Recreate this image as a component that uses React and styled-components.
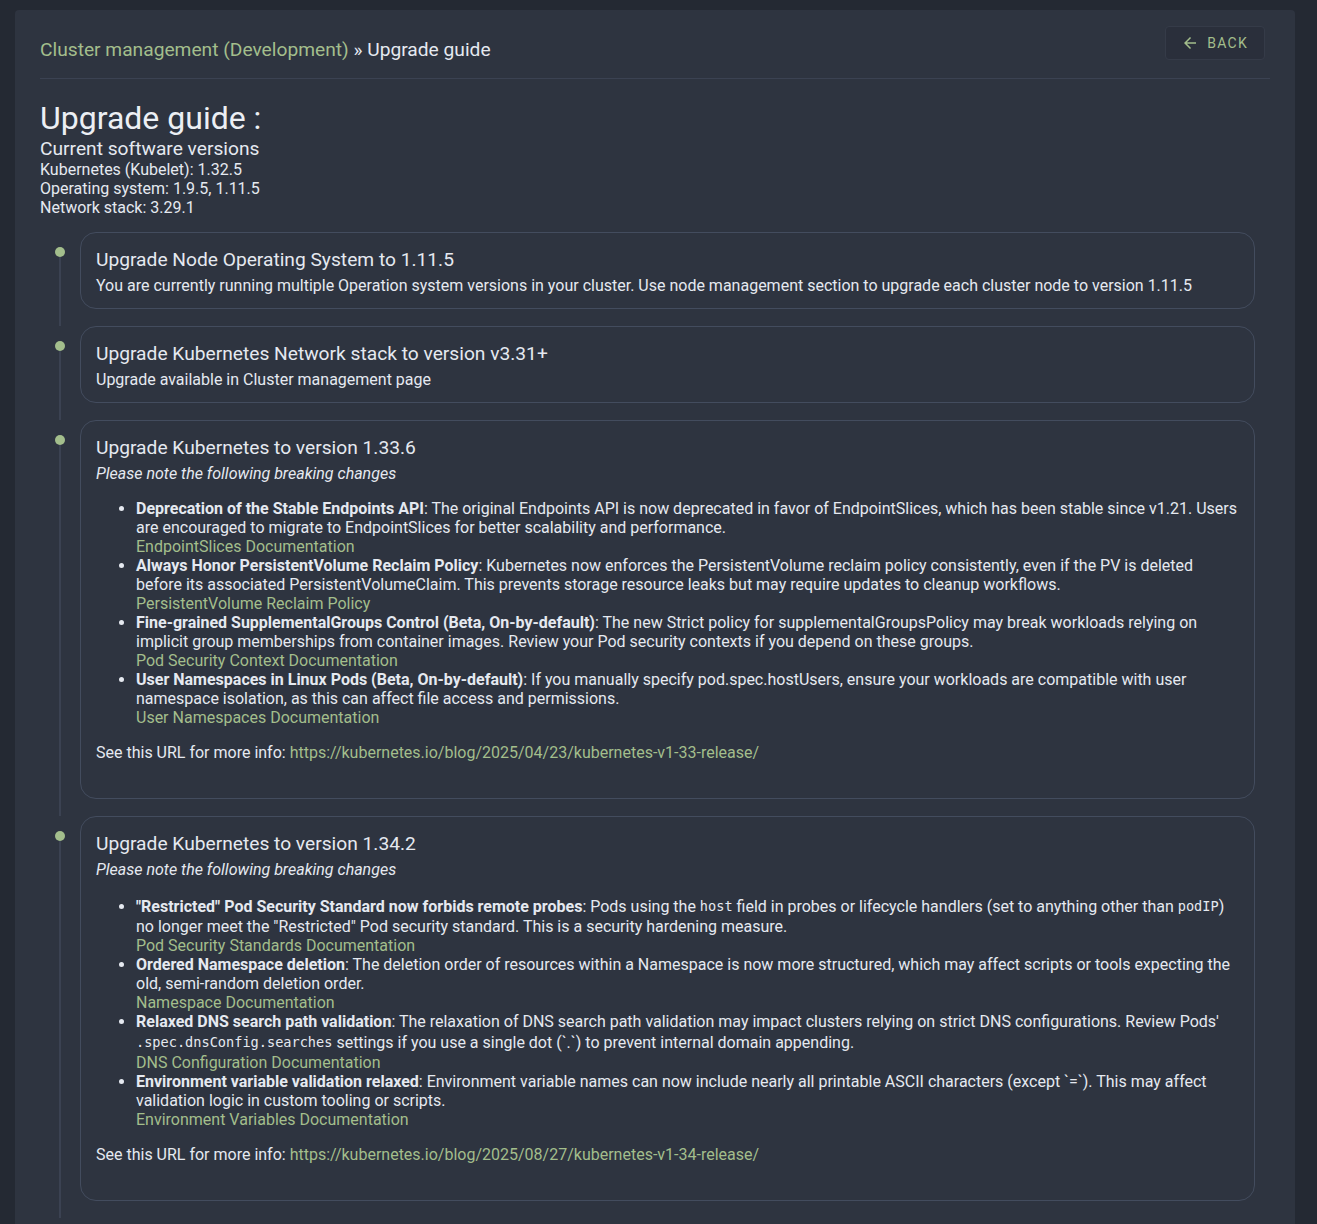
import React from "react";
import styled, { createGlobalStyle } from "styled-components";

const GlobalStyle = createGlobalStyle`
  html, body { margin: 0; padding: 0; background: #242933; }
  body {
    font-family: Roboto, "Liberation Sans", Arial, sans-serif;
    color: #e5e9f0;
    padding: 10px 15px;
  }
  * { box-sizing: border-box; }
`;

const Panel = styled.div`
  width: 1280px;
  background: #2e3440;
  border-radius: 4px;
  padding: 16px 25px 40px 25px;
`;

const Header = styled.div`
  display: flex;
  justify-content: space-between;
  align-items: flex-start;
  border-bottom: 1px solid #3b4252;
  padding-bottom: 15px;
`;

const Breadcrumb = styled.div`
  margin-top: 10px;
  font-size: 19.2px;
  line-height: 27px;
  color: #e5e9f0;
`;

const Crumb = styled.a`
  color: #a3be8c;
  text-decoration: none;
`;

const BackButton = styled.button`
  display: inline-flex;
  align-items: center;
  gap: 8px;
  height: 34px;
  margin-right: 5px;
  padding: 0 16px 0 15px;
  background: #2a2f3b;
  border: 1px solid #353b48;
  border-radius: 4px;
  color: #a3be8c;
  font-family: Roboto, "Liberation Sans", Arial, sans-serif;
  font-size: 14px;
  font-weight: 400;
  letter-spacing: 1.25px;
  text-transform: uppercase;
  cursor: pointer;
`;

const Title = styled.h1`
  margin: 19px 0 0 0;
  font-size: 32px;
  font-weight: 400;
  line-height: 40px;
  color: #eceff4;
`;

const Subtitle = styled.div`
  font-size: 19.2px;
  line-height: 22px;
  color: #e5e9f0;
`;

const VersionLine = styled.div`
  font-size: 16px;
  line-height: 19px;
  color: #e5e9f0;
`;

const Timeline = styled.div`
  margin-top: 15px;
  padding-right: 15px;
  display: flex;
  flex-direction: column;
`;

const Item = styled.div`
  display: flex;
  align-items: stretch;
  padding-bottom: ${(p) => (p.$last ? "30px" : "0")};
`;

const Separator = styled.div`
  width: 40px;
  flex: 0 0 40px;
  display: flex;
  flex-direction: column;
  align-items: center;
`;

const Dot = styled.span`
  width: 10px;
  height: 10px;
  margin-top: 15px;
  border-radius: 50%;
  background: #a3be8c;
`;

const Connector = styled.span`
  flex: 1;
  width: 2px;
  background: #3b4252;
`;

const CardWrap = styled.div`
  flex: 1;
  padding-bottom: 17px;
`;

const Card = styled.div`
  border: 1px solid #434c5e;
  border-radius: 16px;
  padding: 13px 15px 13px 15px;
`;

const CardTitle = styled.div`
  font-size: 19.2px;
  line-height: 28px;
  margin-bottom: 2px;
  color: #e5e9f0;
`;

const Text = styled.div`
  font-size: 16px;
  line-height: 19px;
  color: #e5e9f0;
  font-style: ${(p) => (p.$italic ? "italic" : "normal")};
`;

const List = styled.ul`
  margin: 16px 0;
  padding-left: 40px;
  font-size: 16px;
  line-height: 19px;
`;

const Li = styled.li`
  color: #e5e9f0;
`;

const Strong = styled.b`
  font-weight: 700;
`;

const Code = styled.code`
  font-family: "DejaVu Sans Mono", monospace;
  font-size: 0.85em;
  line-height: 22px;
  vertical-align: 1px;
`;

const DocLink = styled.a`
  display: block;
  color: #a3be8c;
  text-decoration: none;
`;

const InlineLink = styled.a`
  color: #a3be8c;
  text-decoration: none;
`;

const MoreInfo = styled.div`
  font-size: 16px;
  line-height: 19px;
  margin-bottom: 23px;
`;

const ArrowBack = () => (
  <svg width="18" height="18" viewBox="0 0 24 24" fill="currentColor">
    <path d="M20 11H7.83l5.59-5.59L12 4l-8 8 8 8 1.41-1.41L7.83 13H20v-2z" />
  </svg>
);

const steps = [
  {
    title: "Upgrade Node Operating System to 1.11.5",
    body: (
      <Text>
        You are currently running multiple Operation system versions in your
        cluster. Use node management section to upgrade each cluster node to
        version 1.11.5
      </Text>
    ),
  },
  {
    title: "Upgrade Kubernetes Network stack to version v3.31+",
    body: <Text>Upgrade available in Cluster management page</Text>,
  },
  {
    title: "Upgrade Kubernetes to version 1.33.6",
    body: (
      <>
        <Text $italic>Please note the following breaking changes</Text>
        <List>
          <Li>
            <Strong>Deprecation of the Stable Endpoints API</Strong>: The
            original Endpoints API is now deprecated in favor of EndpointSlices,
            which has been stable since v1.21. Users are encouraged to migrate
            to EndpointSlices for better scalability and performance.
            <DocLink href="#">EndpointSlices Documentation</DocLink>
          </Li>
          <Li>
            <Strong>Always Honor PersistentVolume Reclaim Policy</Strong>:
            Kubernetes now enforces the PersistentVolume reclaim policy
            consistently, even if the PV is deleted before its associated
            PersistentVolumeClaim. This prevents storage resource leaks but may
            require updates to cleanup workflows.
            <DocLink href="#">PersistentVolume Reclaim Policy</DocLink>
          </Li>
          <Li>
            <Strong>
              Fine-grained SupplementalGroups Control (Beta, On-by-default)
            </Strong>
            : The new Strict policy for supplementalGroupsPolicy may break
            workloads relying on implicit group memberships from container
            images. Review your Pod security contexts if you depend on these
            groups.
            <DocLink href="#">Pod Security Context Documentation</DocLink>
          </Li>
          <Li>
            <Strong>User Namespaces in Linux Pods (Beta, On-by-default)</Strong>
            : If you manually specify pod.spec.hostUsers, ensure your workloads
            are compatible with user namespace isolation, as this can affect
            file access and permissions.
            <DocLink href="#">User Namespaces Documentation</DocLink>
          </Li>
        </List>
        <MoreInfo>
          See this URL for more info:{" "}
          <InlineLink href="#">
            https://kubernetes.io/blog/2025/04/23/kubernetes-v1-33-release/
          </InlineLink>
        </MoreInfo>
      </>
    ),
  },
  {
    title: "Upgrade Kubernetes to version 1.34.2",
    body: (
      <>
        <Text $italic>Please note the following breaking changes</Text>
        <List>
          <Li>
            <Strong>
              "Restricted" Pod Security Standard now forbids remote probes
            </Strong>
            : Pods using the <Code>host</Code> field in probes or lifecycle
            handlers (set to anything other than <Code>podIP</Code>) no longer
            meet the "Restricted" Pod security standard. This is a security
            hardening measure.
            <DocLink href="#">Pod Security Standards Documentation</DocLink>
          </Li>
          <Li>
            <Strong>Ordered Namespace deletion</Strong>: The deletion order of
            resources within a Namespace is now more structured, which may
            affect scripts or tools expecting the old, semi-random deletion
            order.
            <DocLink href="#">Namespace Documentation</DocLink>
          </Li>
          <Li>
            <Strong>Relaxed DNS search path validation</Strong>: The relaxation
            of DNS search path validation may impact clusters relying on strict
            DNS configurations. Review Pods'{" "}
            <Code>.spec.dnsConfig.searches</Code> settings if you use a single
            dot (`.`) to prevent internal domain appending.
            <DocLink href="#">DNS Configuration Documentation</DocLink>
          </Li>
          <Li>
            <Strong>Environment variable validation relaxed</Strong>:
            Environment variable names can now include nearly all printable
            ASCII characters (except `=`). This may affect validation logic in
            custom tooling or scripts.
            <DocLink href="#">Environment Variables Documentation</DocLink>
          </Li>
        </List>
        <MoreInfo>
          See this URL for more info:{" "}
          <InlineLink href="#">
            https://kubernetes.io/blog/2025/08/27/kubernetes-v1-34-release/
          </InlineLink>
        </MoreInfo>
      </>
    ),
  },
];

export default function App() {
  return (
    <>
      <GlobalStyle />
      <Panel>
        <Header>
          <Breadcrumb>
            <Crumb href="#">Cluster management (Development)</Crumb> »
            Upgrade guide
          </Breadcrumb>
          <BackButton>
            <ArrowBack />
            Back
          </BackButton>
        </Header>
        <Title>Upgrade guide :</Title>
        <Subtitle>Current software versions</Subtitle>
        <VersionLine>Kubernetes (Kubelet): 1.32.5</VersionLine>
        <VersionLine>Operating system: 1.9.5, 1.11.5</VersionLine>
        <VersionLine>Network stack: 3.29.1</VersionLine>
        <Timeline>
          {steps.map((s, i) => (
            <Item key={i} $last={i === steps.length - 1}>
              <Separator>
                <Dot />
                <Connector />
              </Separator>
              <CardWrap>
                <Card>
                  <CardTitle>{s.title}</CardTitle>
                  {s.body}
                </Card>
              </CardWrap>
            </Item>
          ))}
        </Timeline>
      </Panel>
    </>
  );
}
